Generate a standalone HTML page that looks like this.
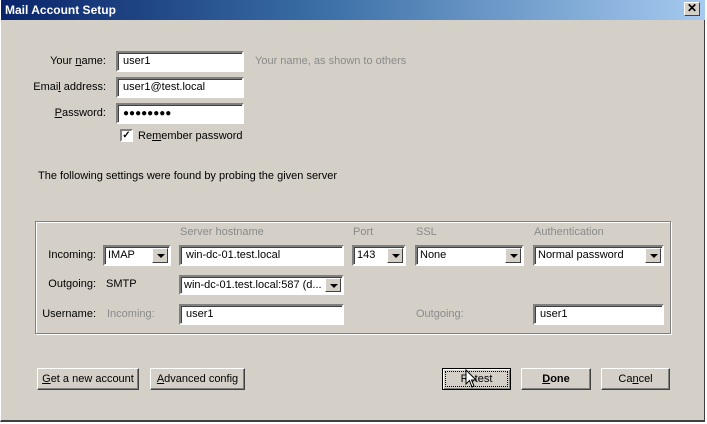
<!DOCTYPE html>
<html><head><style>
*{box-sizing:border-box;margin:0;padding:0}
body{width:707px;height:424px;background:#fff;position:relative;overflow:hidden;font-family:"Liberation Sans",sans-serif;font-size:11px;color:#000}
.win{position:absolute;left:0;top:0;width:705px;height:422px;background:#d4d0c8;border-left:1px solid #fff;border-right:1px solid #404040;border-bottom:2px solid #404040}
.title{position:absolute;left:0;top:0;width:704px;height:20px;background:linear-gradient(90deg,#0a246a 0%,#3a6ea5 45%,#a6caf0 100%);color:#fff;font-weight:bold;font-size:12px;line-height:20px;padding-left:4px}
.close{position:absolute;left:683px;top:2px;width:16px;height:14px;background:#d4d0c8;border:1px solid;border-color:#fff #404040 #404040 #fff;font-size:12px;line-height:11px;text-align:center;color:#000;font-weight:bold}
.a{position:absolute;white-space:nowrap}
.r{text-align:right}
.g{color:#8a8a8a}
.in{position:absolute;background:#fff;border:2px solid;border-color:#808080 #fff #fff #808080;box-shadow:inset 1px 1px 0 #404040;height:21px;line-height:17px;padding-left:5px;white-space:nowrap;overflow:hidden}
.sel{padding-left:3px}
.dd{position:absolute;right:1px;top:1px;width:16px;height:15px;background:#d4d0c8;border:1px solid;border-color:#fff #404040 #404040 #fff}
.dd:after{content:"";position:absolute;left:4px;top:5px;border-left:4px solid transparent;border-right:4px solid transparent;border-top:4px solid #000}
.btn{position:absolute;height:22px;border:1px solid;border-color:#fff #404040 #404040 #fff;box-shadow:inset -1px -1px 0 #808080;text-align:center;line-height:20px;font-size:11px;white-space:nowrap}
.grp{position:absolute;left:34px;top:221px;width:636px;height:113px;border:1px solid #808080;box-shadow:1px 1px 0 #fff,inset 1px 1px 0 #fff}
u{text-decoration:underline}
</style></head><body>
<div class="win">
<div class="title">Mail Account Setup</div>
<div class="close">✕</div>

<div class="a r" style="left:0;width:105px;top:55px">Your <u>n</u>ame:</div>
<div class="a r" style="left:0;width:105px;top:81px">Emai<u>l</u> address:</div>
<div class="a r" style="left:0;width:105px;top:107px"><u>P</u>assword:</div>
<div class="in" style="left:115px;top:51px;width:128px">user1</div>
<div class="in" style="left:115px;top:77px;width:128px">user1@test.local</div>
<div class="in" style="left:115px;top:103px;width:128px;font-size:10px;letter-spacing:0px">●●●●●●●●</div>
<div class="a g" style="left:254px;top:55px">Your name, as shown to others</div>
<div class="a" style="left:119px;top:129px;width:13px;height:13px;background:#fff;border:2px solid;border-color:#808080 #fff #fff #808080;font-size:10px;line-height:9px;text-align:center;font-weight:bold">✓</div>
<div class="a" style="left:137px;top:130px">Re<u>m</u>ember password</div>
<div class="a" style="left:37px;top:170px">The following settings were found by probing the given server</div>

<div class="grp"></div>
<div class="a g" style="left:179px;top:226px">Server hostname</div>
<div class="a g" style="left:352px;top:226px">Port</div>
<div class="a g" style="left:415px;top:226px">SSL</div>
<div class="a g" style="left:533px;top:226px">Authentication</div>

<div class="a r" style="left:30px;width:65px;top:249px">Incoming:</div>
<div class="in sel" style="left:102px;top:245px;width:68px">IMAP<div class="dd"></div></div>
<div class="in" style="left:178px;top:245px;width:165px">win-dc-01.test.local</div>
<div class="in sel" style="left:351px;top:245px;width:54px">143<div class="dd"></div></div>
<div class="in sel" style="left:414px;top:245px;width:109px">None<div class="dd"></div></div>
<div class="in sel" style="left:532px;top:245px;width:131px">Normal password<div class="dd"></div></div>

<div class="a r" style="left:30px;width:65px;top:278px">Outgoing:</div>
<div class="a" style="left:105px;top:278px">SMTP</div>
<div class="in sel" style="left:178px;top:275px;width:165px;height:20px;line-height:16px">win-dc-01.test.local:587 (d...<div class="dd" style="height:14px"></div></div>

<div class="a r" style="left:30px;width:65px;top:308px">Username:</div>
<div class="a g" style="left:106px;top:308px">Incoming:</div>
<div class="in" style="left:178px;top:304px;width:165px">user1</div>
<div class="a g" style="left:415px;top:308px">Outgoing:</div>
<div class="in" style="left:532px;top:304px;width:131px">user1</div>

<div class="btn" style="left:36px;top:368px;width:102px"><u>G</u>et a new account</div>
<div class="btn" style="left:149px;top:368px;width:95px"><u>A</u>dvanced config</div>
<div class="btn" style="left:441px;top:368px;width:69px;border-color:#000;box-shadow:inset 1px 1px 0 #fff,inset -1px -1px 0 #808080;outline:1px dotted #000;outline-offset:-4px">Retest</div>
<div class="btn" style="left:520px;top:368px;width:70px;font-weight:bold"><u>D</u>one</div>
<div class="btn" style="left:600px;top:368px;width:69px">Ca<u>n</u>cel</div>
<svg class="a" style="left:464px;top:369px" width="14" height="20" viewBox="0 0 14 20"><path d="M1 1 L1 15 L4.5 11.5 L7 18 L9 17 L6.5 11 L11 11 Z" fill="#fff" stroke="#000" stroke-width="1"/></svg>
</div>
</body></html>
